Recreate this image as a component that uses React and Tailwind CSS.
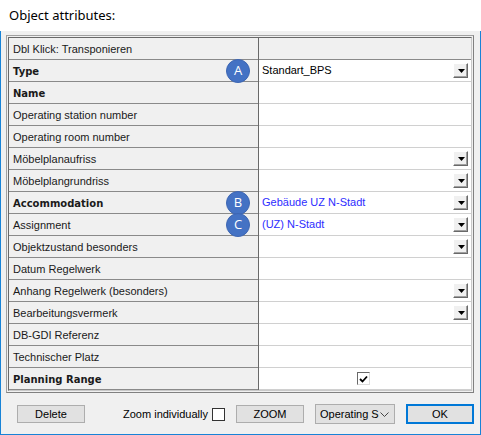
import React from 'react';

const rows = [
  { label: 'Dbl Klick: Transponieren', header: true },
  { label: 'Type', bold: true, badge: 'A', value: 'Standart_BPS', dd: true },
  { label: 'Name', bold: true },
  { label: 'Operating station number' },
  { label: 'Operating room number' },
  { label: 'Möbelplanaufriss', dd: true },
  { label: 'Möbelplangrundriss', dd: true },
  { label: 'Accommodation', bold: true, badge: 'B', value: 'Gebäude UZ N-Stadt', blue: true, dd: true },
  { label: 'Assignment', badge: 'C', value: '(UZ) N-Stadt', blue: true, dd: true },
  { label: 'Objektzustand besonders', dd: true },
  { label: 'Datum Regelwerk' },
  { label: 'Anhang Regelwerk (besonders)', dd: true },
  { label: 'Bearbeitungsvermerk', dd: true },
  { label: 'DB-GDI Referenz' },
  { label: 'Technischer Platz' },
  { label: 'Planning Range', bold: true, check: true },
];

const DropButton = () => (
  <div className="ml-auto w-[15px] h-[15px] shrink-0 bg-[#f0f0f0] border border-t-white border-l-white border-r-[#696969] border-b-[#696969] shadow-[inset_-1px_-1px_0_#a0a0a0] flex items-center justify-center">
    <svg width="7" height="4" viewBox="0 0 7 4" className="mt-[1px] ml-[1px]">
      <path d="M0 0h7L3.5 4z" fill="#000" />
    </svg>
  </div>
);

const Row = ({ row }) => {
  return (
    <div className="flex h-[22px]">
      {/* label cell */}
      <div
        className={`relative w-[249px] shrink-0 border-b border-[#8a8a8a] bg-[#f0f0f0] pl-[4px] pt-[1px] flex items-center text-[#1a1a1a] ${
          row.bold
            ? "font-bold text-[10px] font-['DejaVu_Sans',sans-serif]"
            : "text-[11px] font-['Liberation_Sans',Arial,sans-serif]"
        }`}
      >
        {row.label}
        {row.badge && (
          <div className="absolute right-[8px] top-1/2 -translate-y-1/2 z-10 w-[24px] h-[24px] rounded-full bg-[#4472c4] border border-[#3d66b3] flex items-center justify-center text-white text-[13px] font-normal font-['Open_Sans',sans-serif]">
            {row.badge}
          </div>
        )}
      </div>
      <div className="w-px bg-[#696969]" />
      {/* value cell */}
      <div
        className={`flex-1 flex items-center pl-[3px] pr-[3px] text-[11px] font-['Liberation_Sans',Arial,sans-serif] ${
          row.header ? 'bg-[#f0f0f0] border-b border-[#8a8a8a]' : 'bg-white border-b border-[#d0d0d0]'
        } ${row.blue ? 'text-[#2d2dff]' : 'text-black'}`}
      >
        {row.value && <span>{row.value}</span>}
        {row.dd && <DropButton />}
        {row.check && (
          <div className="mx-auto -translate-x-[2px] w-[13px] h-[13px] bg-white border border-t-[#696969] border-l-[#696969] border-r-[#dcdcdc] border-b-[#dcdcdc] flex items-center justify-center">
            <svg width="9" height="8" viewBox="0 0 9 8">
              <path d="M1 4l2.5 2.5L8 1.5" stroke="#000" strokeWidth="1.8" fill="none" />
            </svg>
          </div>
        )}
      </div>
    </div>
  );
};

const Button = ({ children, className = '' }) => (
  <div
    className={`h-[18px] w-[68px] shrink-0 bg-[#e1e1e1] border border-[#adadad] flex items-center justify-center text-[11px] text-black font-['Liberation_Sans',Arial,sans-serif] ${className}`}
  >
    {children}
  </div>
);

export default function App() {
  return (
    <div className="w-[481px] h-[435px] bg-white flex flex-col overflow-hidden">
      {/* header */}
      <div className="h-[31px] shrink-0 pl-[9px] pt-[6px] text-[13px] text-black font-['Noto_Sans',sans-serif]">
        Object attributes:
      </div>

      <div className="flex-1 flex flex-col bg-[#f0f0f0] border-x border-b border-[#1883d7] pl-[5px] pr-[6px] pt-[4px]">
        {/* grid frame */}
        <div className="border border-t-[#a0a0a0] border-l-[#a0a0a0] border-r-[#808080] border-b-[#808080] p-px">
          <div className="border border-t-[#696969] border-l-[#696969] border-r-[#c8c8c8] border-b-[#c8c8c8] flex flex-col">
            {rows.map((r, i) => (
              <Row key={i} row={r} />
            ))}
          </div>
        </div>

        {/* footer */}
        <div className="flex-1 flex items-center pl-[11px] pt-[1px]">
          <Button>Delete</Button>
          <div className="w-[140px] shrink-0 flex items-center justify-end">
            <span className="text-[11px] text-black font-['Liberation_Sans',Arial,sans-serif] whitespace-nowrap">Zoom individually</span>
            <div className="ml-[4px] w-[13px] h-[13px] shrink-0 bg-white border border-[#333]" />
          </div>
          <Button className="ml-[11px]">ZOOM</Button>
          <div className="ml-[11px] w-[80px] h-[20px] shrink-0 bg-[#e1e1e1] border border-[#adadad] flex items-center pl-[4px] pr-[5px] text-[11px] text-black font-['Liberation_Sans',Arial,sans-serif]">
            <span className="whitespace-nowrap">Operating S</span>
            <svg width="9" height="5" viewBox="0 0 9 5" className="ml-auto">
              <path d="M0.5 0.5L4.5 4.5L8.5 0.5" stroke="#444" strokeWidth="1" fill="none" />
            </svg>
          </div>
          <div className="ml-[11px] w-[68px] h-[20px] shrink-0 bg-[#e1e1e1] border-2 border-[#0078d7] flex items-center justify-center text-[11px] text-black font-['Liberation_Sans',Arial,sans-serif]">
            OK
          </div>
        </div>
      </div>
    </div>
  );
}
